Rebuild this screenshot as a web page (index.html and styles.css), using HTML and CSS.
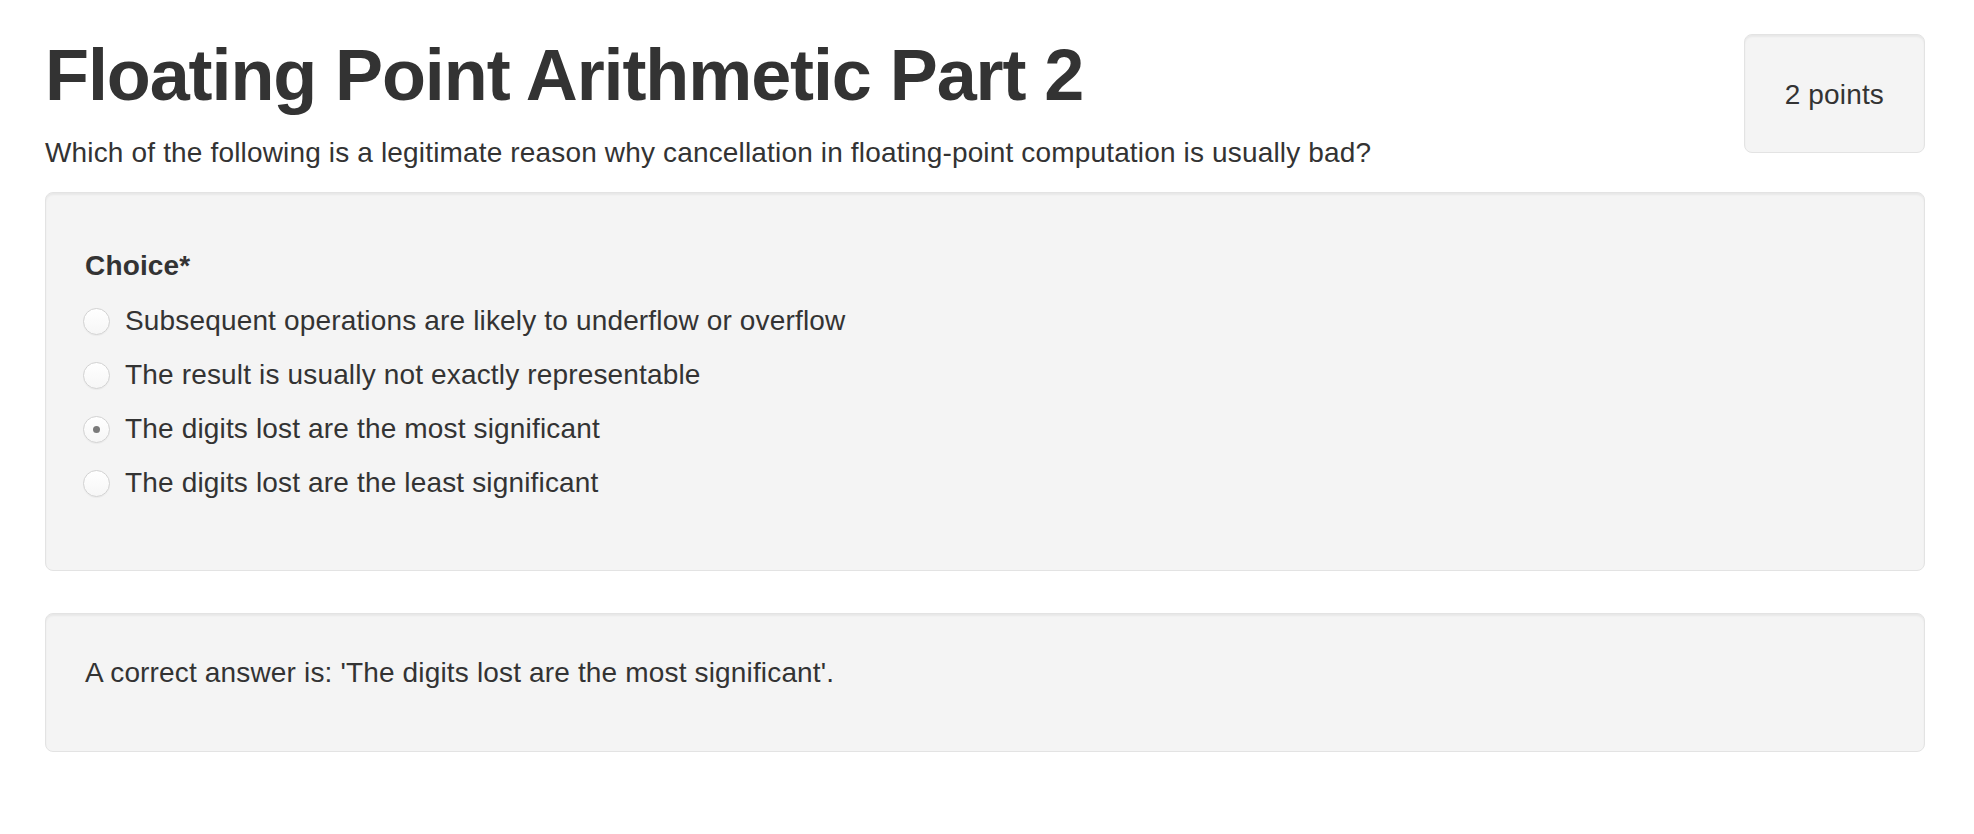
FILE: index.html
```html
<!DOCTYPE html>
<html lang="en">
<head>
<meta charset="utf-8">
<title>Floating Point Arithmetic Part 2</title>
<link rel="stylesheet" href="styles.css">
</head>
<body>
<div class="page">
  <div class="header">
    <div class="title-block">
      <h1 class="title">Floating Point Arithmetic Part 2</h1>
      <p class="question">Which of the following is a legitimate reason why cancellation in floating-point computation is usually bad?</p>
    </div>
    <div class="points">2 points</div>
  </div>

  <div class="well well-choices">
    <div class="field-label">Choice*</div>
    <div class="options">
      <label class="option"><input class="radio" type="radio" name="choice"><span>Subsequent operations are likely to underflow or overflow</span></label>
      <label class="option"><input class="radio" type="radio" name="choice"><span>The result is usually not exactly representable</span></label>
      <label class="option"><input class="radio" type="radio" name="choice" checked><span>The digits lost are the most significant</span></label>
      <label class="option"><input class="radio" type="radio" name="choice"><span>The digits lost are the least significant</span></label>
    </div>
  </div>

  <div class="well well-answer">
    <p class="answer">A correct answer is: 'The digits lost are the most significant'.</p>
  </div>
</div>
</body>
</html>
```

FILE: styles.css
```css
html, body {
  margin: 0;
  padding: 0;
  background: #ffffff;
}

body {
  font-family: "Liberation Sans", Arial, Helvetica, sans-serif;
  font-size: 28px;
  line-height: 40px;
  letter-spacing: 0.16px;
  color: #333333;
}

.page {
  padding: 0 49px 0 45px;
}

.header {
  display: flex;
  justify-content: space-between;
  align-items: flex-start;
}

.title {
  margin: 36px 0 0 0;
  font-size: 72px;
  line-height: 79px;
  font-weight: bold;
  letter-spacing: -1.1px;
  color: #333333;
}

.question {
  margin: 18px 0 0 0;
}

.points {
  margin-top: 34px;
  padding: 40px 40px 37px;
  border: 1px solid #e3e3e3;
  border-radius: 8px;
  background: #f4f4f4;
  box-shadow: inset 0 2px 2px rgba(0, 0, 0, 0.05);
  white-space: nowrap;
}

.well {
  border: 1px solid #e3e3e3;
  border-radius: 8px;
  background: #f4f4f4;
  box-shadow: inset 0 2px 2px rgba(0, 0, 0, 0.05);
  padding: 39px;
}

.well-choices {
  margin-top: 19px;
}

.field-label {
  margin-top: 14px;
  font-weight: bold;
}

.options {
  display: flex;
  flex-direction: column;
  gap: 14px;
  margin-top: 15px;
  margin-bottom: 28px;
}

.option {
  display: flex;
  align-items: center;
  height: 40px;
}

.radio {
  -webkit-appearance: none;
  appearance: none;
  box-sizing: border-box;
  width: 27px;
  height: 27px;
  margin: 0 15px 0 -2px;
  border: 1px solid #d2d2d2;
  border-radius: 50%;
  background: linear-gradient(#ffffff, #f6f6f6);
  box-shadow: 0 1px 1px rgba(0, 0, 0, 0.04);
  display: flex;
  align-items: center;
  justify-content: center;
  flex: none;
}

.radio:checked::after {
  content: "";
  width: 7px;
  height: 7px;
  border-radius: 50%;
  background: #7a7a7a;
}

.well-answer {
  margin-top: 42px;
}

.answer {
  margin: 0 0 19px 0;
}
```
